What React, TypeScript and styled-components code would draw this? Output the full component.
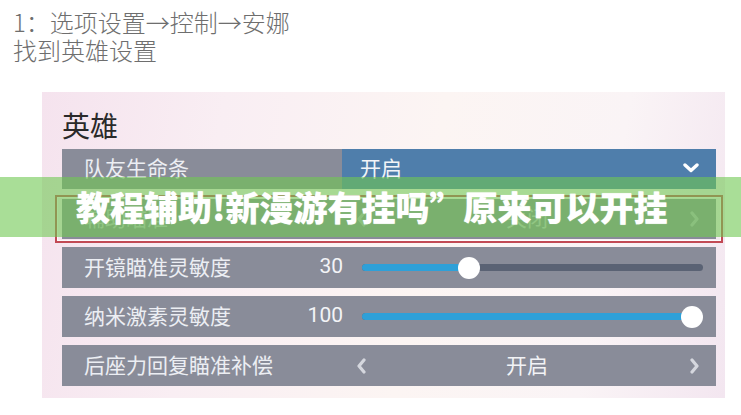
import React from "react";
import styled, { createGlobalStyle } from "styled-components";

const GlobalStyle = createGlobalStyle`
  html, body { margin: 0; padding: 0; background: #ffffff; }
  body { font-family: "Noto Sans CJK SC", "Noto Sans", sans-serif; }
`;

const Page = styled.div`
  position: relative;
  width: 741px;
  height: 415px;
  padding: 8px 0 0 13px;
  box-sizing: border-box;
  overflow: hidden;
`;

const Intro = styled.div`
  font-size: 24px;
  line-height: 28px;
  color: #6e6e6e;
  font-weight: 300;
`;

const Panel = styled.div`
  margin: 28px 0 0 29px;
  width: 683px;
  height: 306px;
  box-sizing: border-box;
  padding: 16px 9px 12px 20px;
  background: linear-gradient(100deg, #f5e3ee 0%, #f9eef3 25%, #fcf5f3 55%, #faf4f6 80%, #f3e6f0 100%);
`;

const Title = styled.div`
  font-size: 28px;
  line-height: 34px;
  color: #2a2a2a;
  margin-bottom: 7px;
`;

const Rows = styled.div`
  display: flex;
  flex-direction: column;
  gap: 8px;
`;

const Row = styled.div<{ $h?: number }>`
  display: flex;
  align-items: center;
  height: ${(p) => p.$h ?? 41}px;
  background: #898c99;
  color: #eceef3;
  font-size: 21px;
  line-height: 1;
  box-sizing: border-box;
`;

const Label = styled.div<{ $w: number; $faded?: boolean }>`
  flex: 0 0 auto;
  width: ${(p) => p.$w}px;
  padding: 0 0 3px 22px;
  box-sizing: border-box;
  white-space: nowrap;
  opacity: ${(p) => (p.$faded ? 0.55 : 1)};
`;

const SelectBox = styled.div`
  flex: 1;
  height: 100%;
  display: flex;
  align-items: center;
  justify-content: space-between;
  background: #4f7eab;
  padding: 0 17px 3px 18px;
  box-sizing: border-box;
  color: #f2f4f8;
`;

const Value = styled.div`
  flex: 0 0 auto;
  width: 59px;
  padding-bottom: 3px;
  text-align: right;
  font-family: Roboto, "Noto Sans", sans-serif;
  font-size: 21px;
  color: #f3f4f7;
`;

const Track = styled.div`
  position: relative;
  flex: 1;
  height: 7px;
  margin: 0 13px 0 19px;
  border-radius: 4px;
  background: #5a6274;
`;

const Fill = styled.div`
  position: absolute;
  left: 0;
  top: 0;
  bottom: 0;
  border-radius: 4px;
  background: #2ea0d8;
`;

const Knob = styled.div`
  position: absolute;
  top: 50%;
  width: 22px;
  height: 22px;
  margin: -11px 0 0 -11px;
  border-radius: 50%;
  background: #ffffff;
`;

const Chooser = styled.div<{ $faded?: boolean }>`
  flex: 1;
  display: flex;
  align-items: center;
  justify-content: space-between;
  padding: 0 16px 0 14px;
  opacity: ${(p) => (p.$faded ? 0.55 : 1)};
`;

const ChoiceText = styled.span`
  color: #f2f3f6;
  padding-bottom: 3px;
  margin-right: 2px;
`;

const Highlight = styled.div`
  margin: -2px -7px -4px -7px;
  border: 2px solid #c24a55;
  padding: 2px 5px;
  box-shadow: inset 0 0 0 1px rgba(255, 255, 255, 0.8);
`;

const Banner = styled.div`
  position: absolute;
  left: 0;
  right: 0;
  top: 177px;
  height: 60px;
  background: rgba(112, 200, 82, 0.6);
  display: flex;
  align-items: center;
  padding: 0 0 2px 76px;
  box-sizing: border-box;
  font-size: 34px;
  font-weight: 900;
  color: #ffffff;
  white-space: nowrap;
  text-shadow: 0 0 1px rgba(255, 255, 255, 0.6);
`;

const ChevronLeft = ({ color = "#d5d7de" }: { color?: string }) => (
  <svg width="10" height="16" viewBox="0 0 10 16">
    <polyline points="8,2 3,8 8,14" fill="none" stroke={color} strokeWidth="3.2" strokeLinecap="round" strokeLinejoin="round" />
  </svg>
);

const ChevronRight = ({ color = "#d5d7de" }: { color?: string }) => (
  <svg width="10" height="16" viewBox="0 0 10 16">
    <polyline points="2,2 7,8 2,14" fill="none" stroke={color} strokeWidth="3.2" strokeLinecap="round" strokeLinejoin="round" />
  </svg>
);

const ChevronDown = () => (
  <svg width="16" height="10" viewBox="0 0 16 10">
    <polyline points="2,2 8,7.5 14,2" fill="none" stroke="#ffffff" strokeWidth="3.4" strokeLinecap="round" strokeLinejoin="round" />
  </svg>
);

const Slider = ({ pct }: { pct: number }) => {
  const pos = `calc(11px + (100% - 22px) * ${pct / 100})`;
  return (
    <Track>
      <Fill style={{ width: pos }} />
      <Knob style={{ left: pos }} />
    </Track>
  );
};

export default function App() {
  return (
    <>
      <GlobalStyle />
      <Page>
        <Intro>
          1：选项设置→控制→安娜
          <br />
          找到英雄设置
        </Intro>
        <Panel>
          <Title>英雄</Title>
          <Rows>
            <Row $h={40}>
              <Label $w={280}>队友生命条</Label>
              <SelectBox>
                <span>开启</span>
                <ChevronDown />
              </SelectBox>
            </Row>
            <Highlight>
              <Row $h={40}>
                <Label $w={280} $faded>辅助瞄准</Label>
                <Chooser $faded>
                  <ChevronLeft />
                  <ChoiceText>关闭</ChoiceText>
                  <ChevronRight />
                </Chooser>
              </Row>
            </Highlight>
            <Row>
              <Label $w={222}>开镜瞄准灵敏度</Label>
              <Value>30</Value>
              <Slider pct={30} />
            </Row>
            <Row>
              <Label $w={222}>纳米激素灵敏度</Label>
              <Value>100</Value>
              <Slider pct={100} />
            </Row>
            <Row>
              <Label $w={280}>后座力回复瞄准补偿</Label>
              <Chooser>
                <ChevronLeft />
                <ChoiceText>开启</ChoiceText>
                <ChevronRight />
              </Chooser>
            </Row>
          </Rows>
        </Panel>
        <Banner>教程辅助!新漫游有挂吗”原来可以开挂</Banner>
      </Page>
    </>
  );
}
